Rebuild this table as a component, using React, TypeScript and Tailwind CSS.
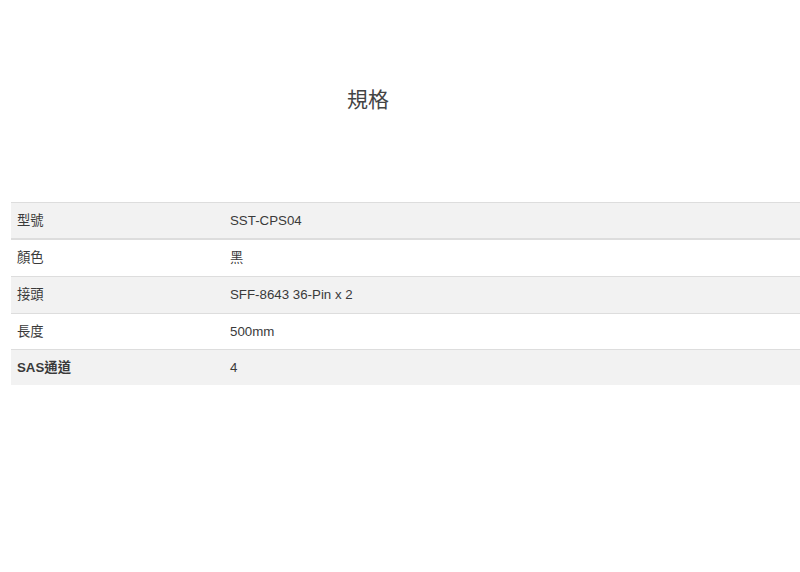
export default function App() {
  const rows: [string, string, boolean][] = [
    ["型號", "SST-CPS04", false],
    ["顏色", "黑", false],
    ["接頭", "SFF-8643 36-Pin x 2", false],
    ["長度", "500mm", false],
    ["SAS通道", "4", true],
  ];
  const heights = ["h-[38px]", "h-[36px]", "h-[37px]", "h-[36px]", "h-[36px]"];
  return (
    <div
      className="w-[800px] h-[572px] bg-white text-[#3a3a3a]"
      style={{ fontFamily: '"Liberation Sans", Arial, "Noto Sans CJK TC", sans-serif' }}
    >
      <div className="pt-[86px] pl-[347px] h-[202px]">
        <div className="text-[21px] leading-[28px] text-[#444]">規格</div>
      </div>
      <div className="ml-[11px] w-[789px] text-[13.3px]">
        {rows.map(([k, v, bold], i) => (
          <div
            key={i}
            className={
              "flex items-center " +
              heights[i] +
              " " +
              (i % 2 === 0 ? "bg-[#f2f2f2] " : "bg-white ") +
              (i === 0
                ? "border-t border-[#ddd] border-b-2"
                : i === 1
                ? ""
                : "border-t border-[#ddd]")
            }
          >
            <div className={"w-[219px] pl-[6px] " + (bold ? "font-bold" : "")}>{k}</div>
            <div>{v}</div>
          </div>
        ))}
      </div>
    </div>
  );
}
